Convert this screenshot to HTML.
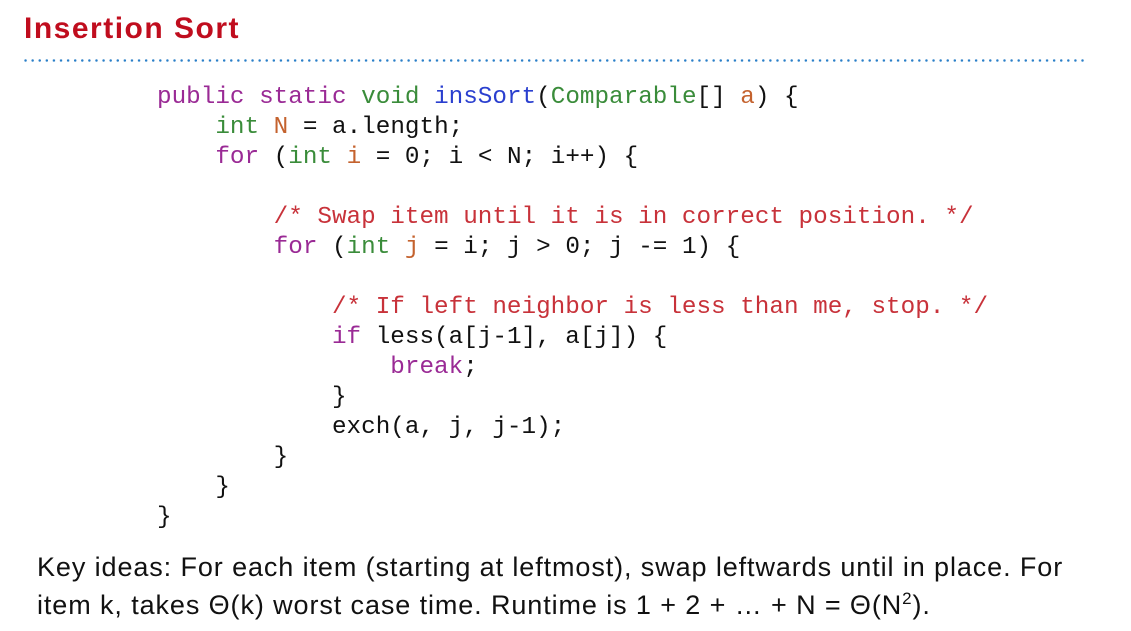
<!DOCTYPE html>
<html><head><style>
body{margin:0;width:1131px;height:631px;background:#fff;overflow:hidden;position:relative;font-family:"Liberation Sans",sans-serif}
.t{position:absolute;left:24px;top:12px;font-size:30px;letter-spacing:1.5px;font-weight:bold;color:#c00d1e;white-space:nowrap}
.dots{position:absolute;left:22px;top:59px;width:1064px;height:3px;background-image:radial-gradient(circle,#2a7fc8 1.1px,transparent 1.4px);background-size:7.1px 3px}
pre{position:absolute;left:157px;top:83px;margin:0;font-family:"Liberation Mono",monospace;font-size:24.3px;line-height:30px;color:#111}
.k{color:#9a2a95}.g{color:#3a8c3a}.b{color:#2a3fcf}.o{color:#c4622e}.c{color:#c8323a}
.p{position:absolute;left:37px;font-size:27px;letter-spacing:0.9px;color:#111;white-space:nowrap}
</style></head><body>
<div class="t">Insertion Sort</div>
<div class="dots"></div>
<pre><span class="k">public static</span> <span class="g">void</span> <span class="b">insSort</span>(<span class="g">Comparable</span>[] <span class="o">a</span>) {
    <span class="g">int</span> <span class="o">N</span> = a.length;
    <span class="k">for</span> (<span class="g">int</span> <span class="o">i</span> = 0; i &lt; N; i++) {

        <span class="c">/* Swap item until it is in correct position. */</span>
        <span class="k">for</span> (<span class="g">int</span> <span class="o">j</span> = i; j &gt; 0; j -= 1) {

            <span class="c">/* If left neighbor is less than me, stop. */</span>
            <span class="k">if</span> less(a[j-1], a[j]) {
                <span class="k">break</span>;
            }
            exch(a, j, j-1);
        }
    }
}</pre>
<div class="p" style="top:552px">Key ideas: For each item (starting at leftmost), swap leftwards until in place. For</div>
<div class="p" style="top:589px">item k, takes Θ(k) worst case time. Runtime is 1 + 2 + … + N = Θ(N<sup style="font-size:17px">2</sup>).</div>
</body></html>
